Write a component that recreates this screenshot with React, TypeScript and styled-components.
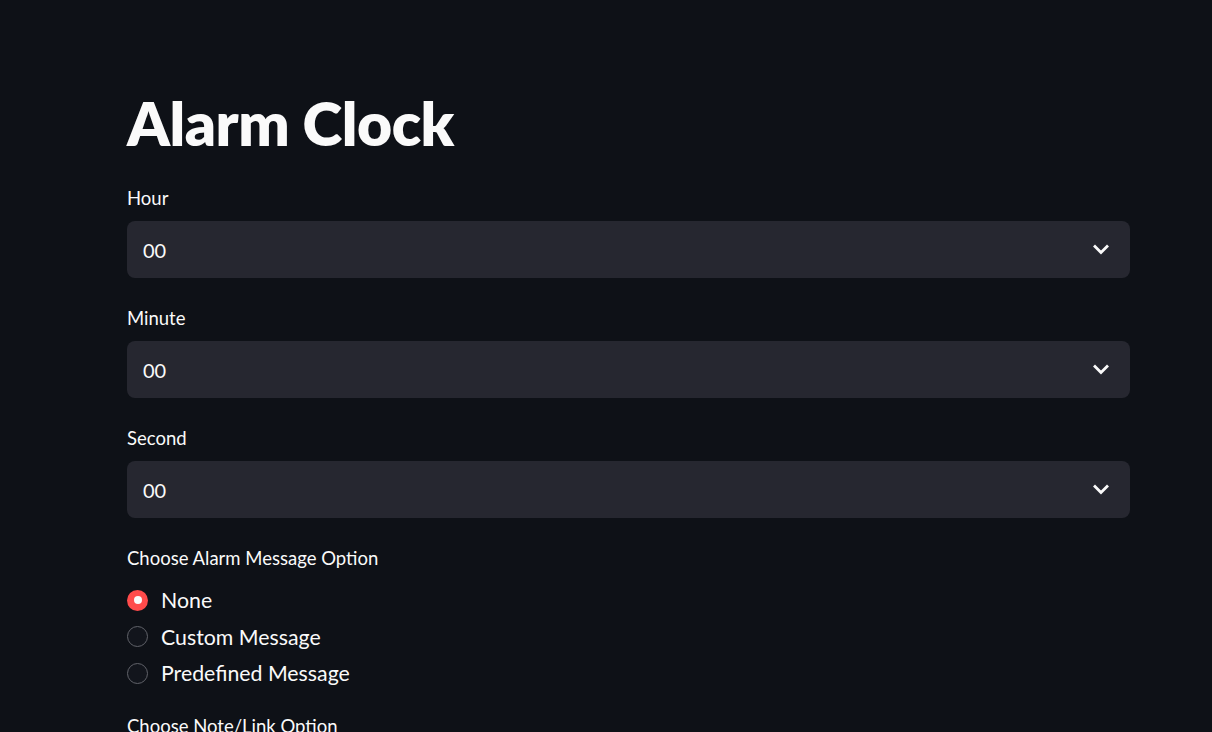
import React from "react";
import styled, { createGlobalStyle } from "styled-components";

const Global = createGlobalStyle`
  html, body { margin: 0; padding: 0; background: #0e1117; }
  body { font-family: Lato, "Noto Sans", "Liberation Sans", sans-serif; color: #fafafa; }
`;

const Page = styled.main`
  min-height: 732px;
  background: #0e1117;
  padding: 88px 0 0 127px;
  box-sizing: border-box;
  overflow: hidden;
`;

const Column = styled.div`
  width: 1003px;
  display: flex;
  flex-direction: column;
`;

const Title = styled.h1`
  margin: 0 0 28px 0;
  font-size: 60.5px;
  font-weight: 800;
  line-height: 70px;
  letter-spacing: -0.5px;
  color: #fafafa;
`;

const Field = styled.div`
  display: flex;
  flex-direction: column;
  margin-bottom: 28px;
`;

const Label = styled.label`
  font-size: 18.5px;
  line-height: 24px;
  height: 24px;
  margin-bottom: 11px;
  color: #fafafa;
`;

const SelectBox = styled.div`
  height: 57px;
  border-radius: 8px;
  background: #262730;
  display: flex;
  align-items: center;
  justify-content: space-between;
  padding: 0 21px 0 16px;
  box-sizing: border-box;
`;

const Value = styled.span`
  font-size: 20px;
  color: #fafafa;
`;

const RadioGroup = styled.div`
  display: flex;
  flex-direction: column;
  gap: 12px;
  margin-top: 7px;
`;

const RadioRow = styled.div`
  display: flex;
  align-items: center;
  height: 24.5px;
  gap: 13px;
`;

const Dot = styled.span<{ $on: boolean }>`
  width: 21px;
  height: 21px;
  border-radius: 50%;
  box-sizing: border-box;
  display: flex;
  align-items: center;
  justify-content: center;
  background: ${(p) => (p.$on ? "#ff4b4b" : "#12151c")};
  border: ${(p) => (p.$on ? "none" : "1.5px solid #61636a")};
  &::after {
    content: "";
    display: ${(p) => (p.$on ? "block" : "none")};
    width: 8px;
    height: 8px;
    border-radius: 50%;
    background: #fafafa;
  }
`;

const OptionText = styled.span`
  font-size: 21.3px;
  color: #fafafa;
`;

const Chevron = () => (
  <svg width="16" height="11" viewBox="0 0 16 11" fill="none">
    <path d="M2 2.5 L8 8.5 L14 2.5" stroke="#fafafa" strokeWidth="2.8" strokeLinecap="square" />
  </svg>
);

const Select = ({ label, value }: { label: string; value: string }) => (
  <Field>
    <Label>{label}</Label>
    <SelectBox>
      <Value>{value}</Value>
      <Chevron />
    </SelectBox>
  </Field>
);

const options = ["None", "Custom Message", "Predefined Message"];

export default function App() {
  return (
    <>
      <Global />
      <Page>
        <Column>
          <Title>Alarm Clock</Title>
          <Select label="Hour" value="00" />
          <Select label="Minute" value="00" />
          <Select label="Second" value="00" />
          <Field>
            <Label>Choose Alarm Message Option</Label>
            <RadioGroup>
              {options.map((o, i) => (
                <RadioRow key={o}>
                  <Dot $on={i === 0} />
                  <OptionText>{o}</OptionText>
                </RadioRow>
              ))}
            </RadioGroup>
          </Field>
          <Field>
            <Label>Choose Note/Link Option</Label>
          </Field>
        </Column>
      </Page>
    </>
  );
}
